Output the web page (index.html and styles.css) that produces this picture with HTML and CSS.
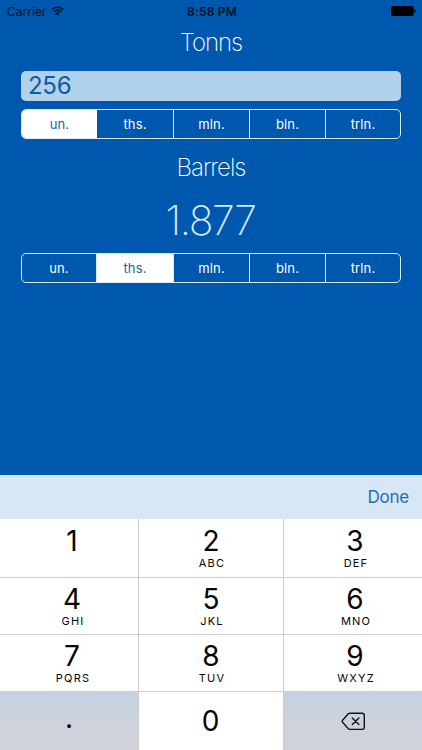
FILE: index.html
```html
<!DOCTYPE html>
<html lang="en">
<head>
<meta charset="utf-8">
<title>Tonns to Barrels</title>
<link rel="stylesheet" href="styles.css">
</head>
<body>
<div class="screen">
  <header class="status">
    <div class="carrier"><span>Carrier</span>
      <svg class="wifi" width="13" height="10" viewBox="0 0 13 10"><g fill="none" stroke="#001126" stroke-width="1.6"><path d="M.7 3.6a8.2 8.2 0 0 1 11.6 0"/><path d="M2.8 5.8a5.2 5.2 0 0 1 7.4 0"/></g><path fill="#001126" d="M6.5 9.4 4.4 7.3a3 3 0 0 1 4.2 0z"/></svg>
    </div>
    <span class="time">8:58 PM</span>
    <svg class="battery" width="26" height="10" viewBox="0 0 26 10"><rect width="22.6" height="10" rx="1.5"/><path d="M23.2 3.2q1.5.4 1.5 1.8t-1.5 1.8z"/></svg>
  </header>
  <main class="converter">
    <h1 class="unit">Tonns</h1>
    <div class="field"><span>256</span></div>
    <div class="segments">
      <span class="segment selected">un.</span><span class="segment">ths.</span><span class="segment">mln.</span><span class="segment">bln.</span><span class="segment">trln.</span>
    </div>
    <h1 class="unit barrels">Barrels</h1>
    <div class="result"><span>1.877</span></div>
    <div class="segments">
      <span class="segment">un.</span><span class="segment selected">ths.</span><span class="segment">mln.</span><span class="segment">bln.</span><span class="segment">trln.</span>
    </div>
  </main>
  <div class="toolbar"><span class="done">Done</span></div>
  <div class="keypad">
    <div class="key"><b>1</b></div>
    <div class="key"><b>2</b><small>ABC</small></div>
    <div class="key"><b>3</b><small>DEF</small></div>
    <div class="key"><b>4</b><small>GHI</small></div>
    <div class="key"><b>5</b><small>JKL</small></div>
    <div class="key"><b>6</b><small>MNO</small></div>
    <div class="key"><b>7</b><small>PQRS</small></div>
    <div class="key"><b>8</b><small>TUV</small></div>
    <div class="key"><b>9</b><small>WXYZ</small></div>
    <div class="key muted point"><b>.</b></div>
    <div class="key zero"><b>0</b></div>
    <div class="key muted delete">
      <svg width="25" height="19" viewBox="0 0 25 19" fill="none" stroke="#10151c" stroke-width="1.4" stroke-linejoin="round" stroke-linecap="round"><path d="M8.7 1.2H21a2.3 2.3 0 0 1 2.3 2.3v11.6a2.3 2.3 0 0 1-2.3 2.3H8.7q-.8 0-1.4-.6L1.6 10.3q-.8-1 0-2L7.3 1.800q.6-.6 1.4-.6z"/><path d="m11.300 6 6.600 6.600m0-6.600-6.600 6.600"/></svg>
    </div>
  </div>
</div>
</body>
</html>
```

FILE: styles.css
```css
* { box-sizing: border-box; }

body {
  margin: 0;
  font-family: Inter, "Liberation Sans", sans-serif;
}

.screen {
  width: 422px;
  height: 750px;
  display: flex;
  flex-direction: column;
  overflow: hidden;
  background: #0057ae;
}

.status {
  height: 22px;
  flex: none;
  display: grid;
  grid-template-columns: 1fr auto 1fr;
  align-items: center;
  padding: 0 5px 0 7px;
  color: #001126;
  font-size: 12px;
}

.carrier {
  display: flex;
  align-items: center;
  gap: 5px;
  letter-spacing: 0;
}

.time {
  font-weight: 600;
  letter-spacing: .2px;
}

.battery {
  justify-self: end;
  fill: #000;
}

.converter {
  flex: 1;
  padding: 0 21px;
  color: #fff;
}

.unit {
  height: 41px;
  margin: 0 0 8px;
  line-height: 41px;
  font-size: 24px;
  font-weight: 200;
  letter-spacing: -1px;
  text-align: center;
}

.field {
  height: 30px;
  margin-bottom: 8px;
  padding-left: 7px;
  border-radius: 5px;
  background: #b2d1ea;
  color: #0d5bac;
  font-size: 24px;
  line-height: 30px;
  letter-spacing: -.3px;
}

.segments {
  height: 30px;
  display: grid;
  grid-template-columns: 74px 77px 76px 76px 1fr;
  border: 1px solid #d9edff;
  border-radius: 5px;
  overflow: hidden;
}

.segment {
  display: flex;
  align-items: center;
  justify-content: center;
  border-left: 1px solid #d9edff;
  font-size: 13px;
  letter-spacing: .15px;
}

.segment:first-child { border-left: 0; }

.selected {
  background: #fff;
  color: #1763aa;
}

.segment.selected:first-child { margin-right: -1px; z-index: 1; }

.barrels {
  height: 56px;
  margin: 0;
  line-height: 58px;
}

.result {
  height: 58px;
  padding-right: 1px;
  color: #d5ebff;
  font-size: 41px;
  font-weight: 200;
  line-height: 51px;
  letter-spacing: -1.4px;
  text-align: center;
}

.toolbar {
  height: 44px;
  flex: none;
  display: flex;
  align-items: center;
  justify-content: flex-end;
  padding-right: 13px;
  background: #d8e7f6;
  color: #1a70b8;
  font-size: 17px;
  letter-spacing: -.2px;
}

.keypad {
  flex: none;
  display: grid;
  grid-template-columns: 139px 145px 138px;
  grid-template-rows: 59px 57px 57px 58px;
  background: #fff;
  color: #050505;
}

.key {
  display: flex;
  flex-direction: column;
  align-items: center;
  padding-top: 5px;
  border-right: 1px solid #cbcdcf;
  border-bottom: 1px solid #cbcdcf;
}

.key:nth-child(3n + 1) { padding-left: 6px; }
.key:nth-child(3n) { padding-left: 4px; border-right: 0; }
.key:nth-last-child(-n + 3) { border-bottom: 0; }
.key:nth-child(-n + 3) { padding-top: 6px; }

.key b {
  height: 32px;
  font-size: 28px;
  font-weight: 400;
  line-height: 32px;
}

.key small {
  height: 13px;
  font-size: 11px;
  line-height: 13px;
  letter-spacing: 1.2px;
  padding-left: 2px;
}

.muted { background: linear-gradient(#c3d1e2, #cdd2dd 50%, #d1d2d9); }

.key.zero { padding-top: 13px; padding-right: 1px; }
.key.point { padding-top: 10px; padding-left: 0; }

.key.delete {
  padding: 20px 0 0;
}
```
